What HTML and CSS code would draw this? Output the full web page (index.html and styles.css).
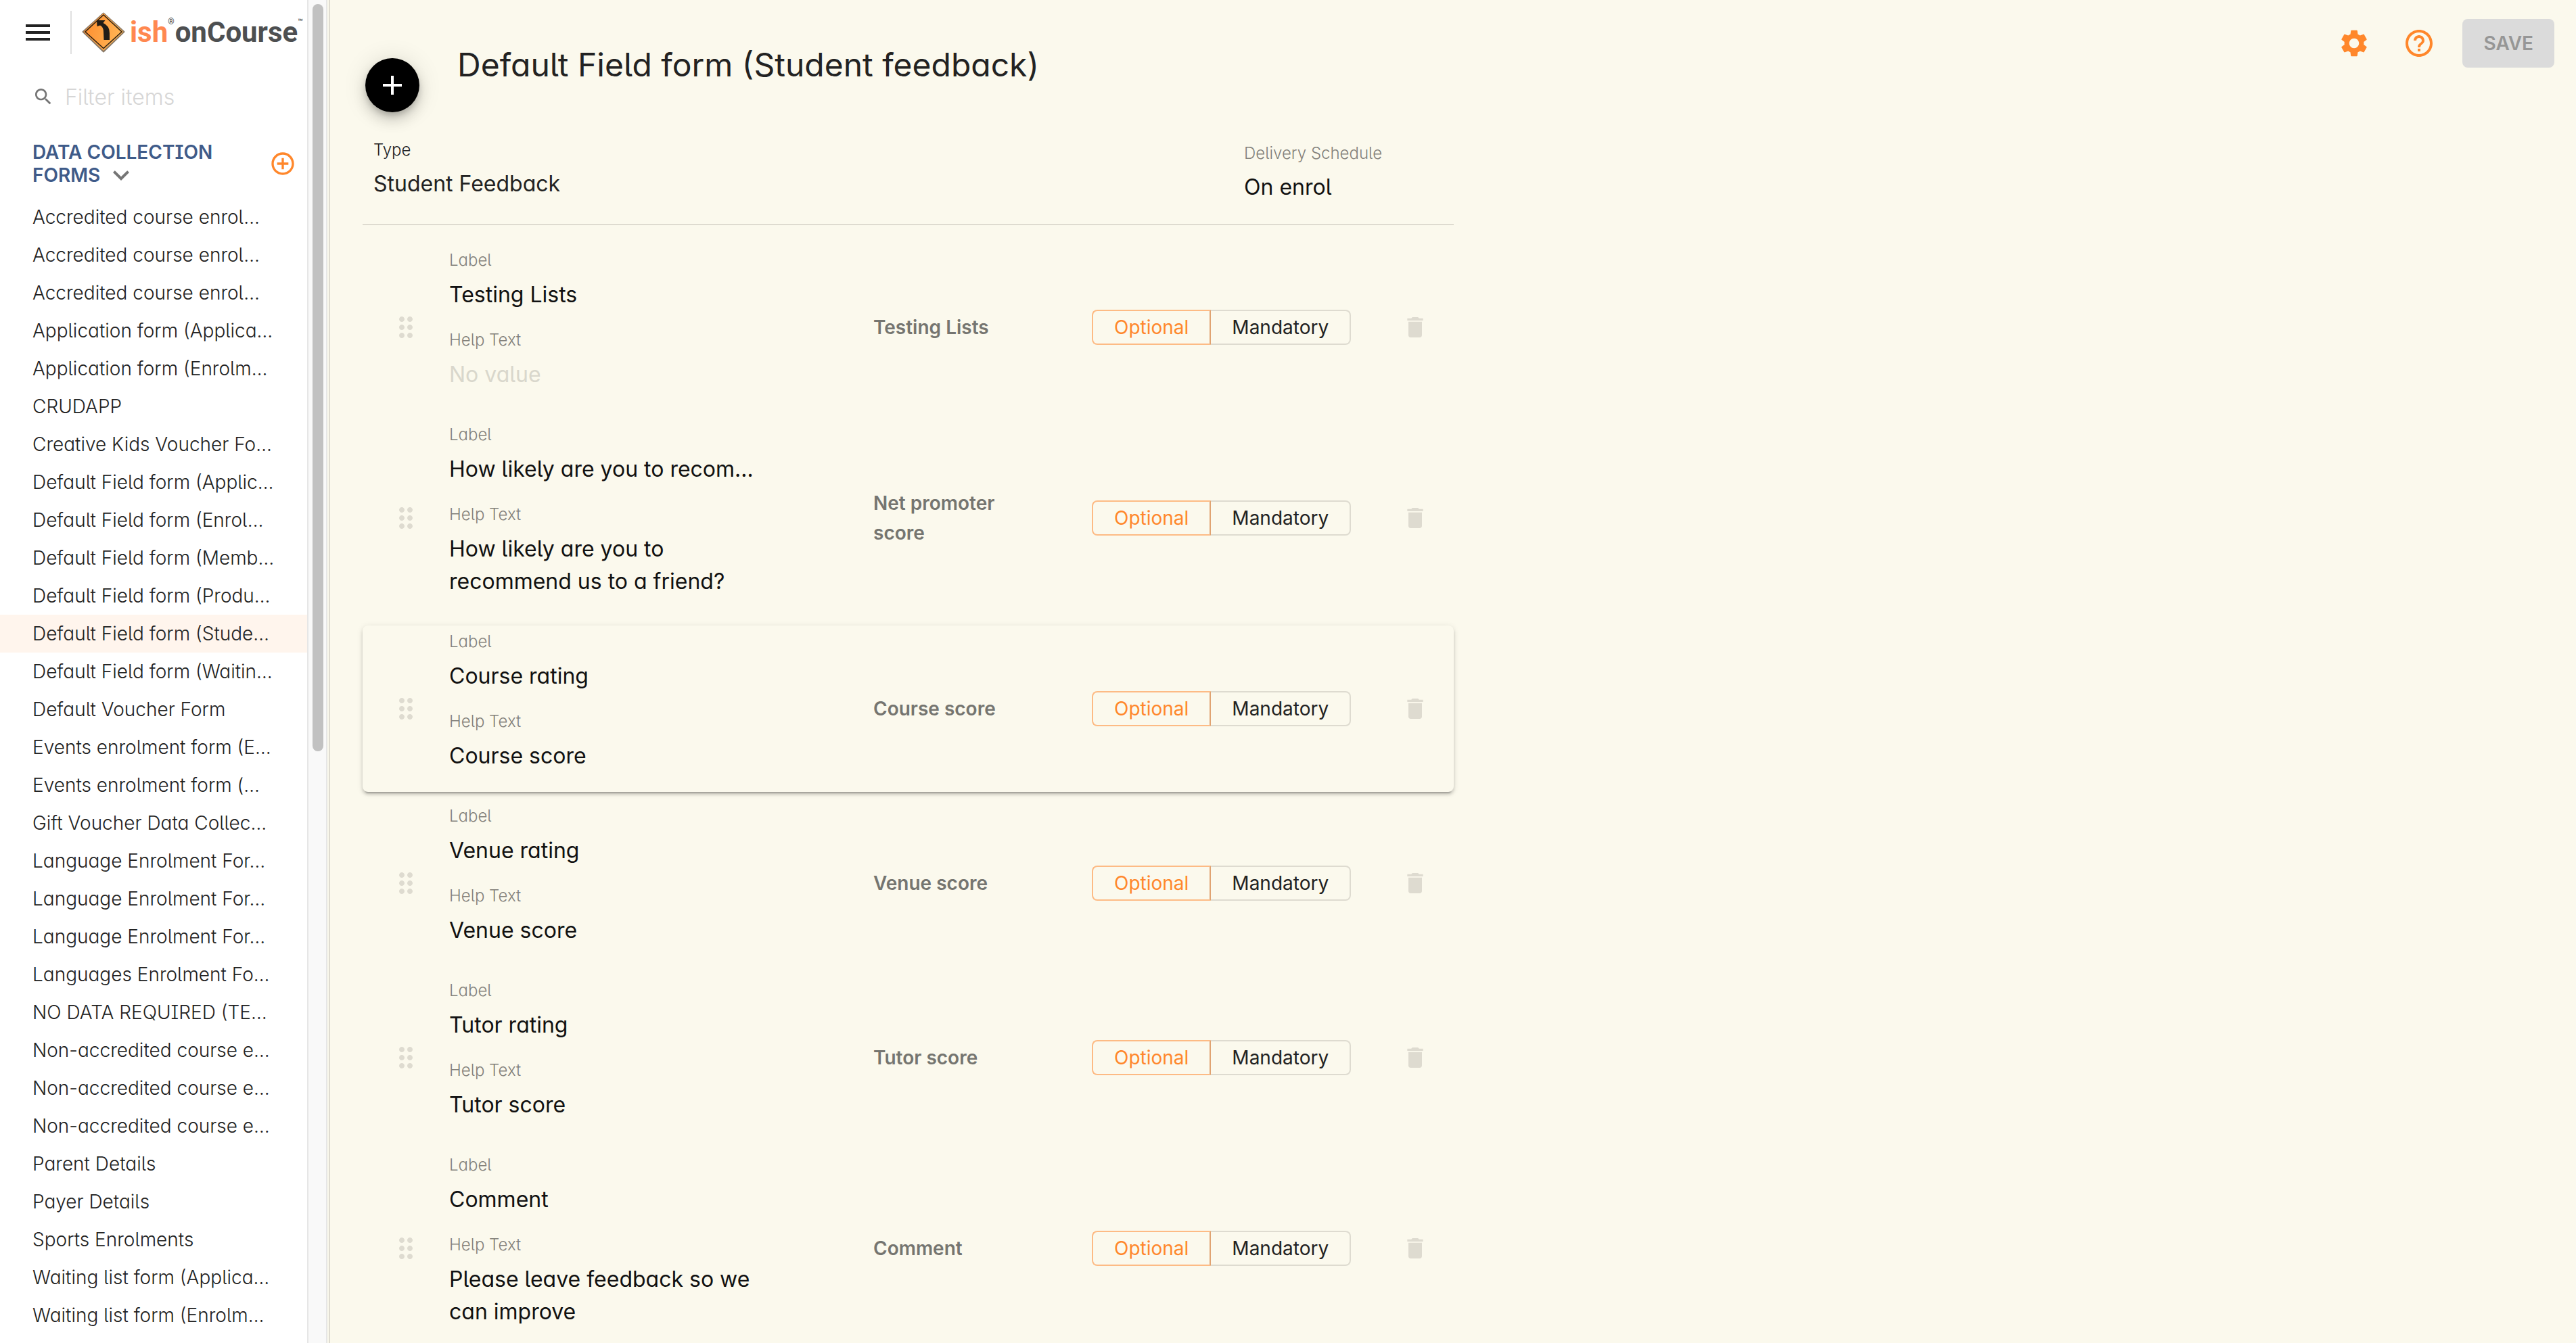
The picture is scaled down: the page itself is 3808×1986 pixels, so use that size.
FILE: index.html
```html
<!DOCTYPE html>
<html lang="en">
<head>
<meta charset="utf-8">
<title>Default Field form (Student feedback)</title>
<link rel="stylesheet" href="styles.css">
</head>
<body>
<svg class="defs" aria-hidden="true">
  <symbol id="drag" viewBox="0 0 24 24"><path d="M11 18c0 1.1-.9 2-2 2s-2-.9-2-2 .9-2 2-2 2 .9 2 2zm-2-8c-1.1 0-2 .9-2 2s.9 2 2 2 2-.9 2-2-.9-2-2-2zm0-6c-1.1 0-2 .9-2 2s.9 2 2 2 2-.9 2-2-.9-2-2-2zm6 4c1.1 0 2-.9 2-2s-.9-2-2-2-2 .9-2 2 .9 2 2 2zm0 2c-1.1 0-2 .9-2 2s.9 2 2 2 2-.9 2-2-.9-2-2-2zm0 6c-1.1 0-2 .9-2 2s.9 2 2 2 2-.9 2-2-.9-2-2-2z"/></symbol>
  <symbol id="trash" viewBox="0 0 24 24"><path d="M6 19c0 1.1.9 2 2 2h8c1.1 0 2-.9 2-2V7H6v12zM19 4h-3.5l-1-1h-5l-1 1H5v2h14V4z"/></symbol>
</svg>
<div class="app">
  <aside class="sidebar">
    <div class="sidebar-body">
      <header class="brand">
        <button class="icon-button" type="button" aria-label="Menu"><svg class="icon" viewBox="0 0 24 24"><path d="M3 18h18v-2H3v2zm0-5h18v-2H3v2zm0-7v2h18V6H3z"/></svg></button>
        <a class="logo" href="#" aria-label="ish onCourse">
          <svg class="logo-sign" viewBox="0 0 64 60">
            <defs><linearGradient id="sign" x1="0" y1="0" x2="1" y2="0.3"><stop offset="0" stop-color="#ff8a2c"/><stop offset="1" stop-color="#ffb454"/></linearGradient></defs>
            <path d="M32 1.500 62.500 29 32 58.500 1.500 29Z" fill="#777" stroke="#8a7a68" stroke-width="2" stroke-linejoin="round"/>
            <path d="M32 1.500 61.500 29 32 57 2.500 29Z" fill="url(#sign)"/>
            <path d="M32 4 59 29 32 53.500 5 29Z" fill="none" stroke="#2b2114" stroke-width="1.500"/>
            <path d="M22 12 34.500 12 31.500 16Q41 20 41 31L41 41H32.500L32 29Q32 22 27 19.500L22.500 21Z" fill="#221d18"/>
          </svg>
          <span class="logo-ish">ish</span><span class="logo-mark">®</span><span class="logo-name">onCourse</span><span class="logo-mark">™</span>
        </a>
      </header>
      <div class="filter">
        <svg class="filter-icon" viewBox="0 0 24 24"><path d="M15.500 14h-.79l-.28-.27C15.410 12.590 16 11.110 16 9.500 16 5.910 13.090 3 9.500 3S3 5.910 3 9.500 5.910 16 9.500 16c1.610 0 3.090-.59 4.230-1.570l.27.28v.79l5 4.990L20.490 19l-4.990-5zm-6 0C7.010 14 5 11.990 5 9.500S7.010 5 9.500 5 14 7.010 14 9.500 11.990 14 9.500 14z"/></svg>
        <input class="filter-input" type="text" placeholder="Filter items" aria-label="Filter items">
      </div>
      <div class="group">
        <h2 class="group-title">DATA COLLECTION FORMS <svg class="chevron" viewBox="0 0 24 24"><path d="M7.410 8.590 12 13.170l4.590-4.580L18 10l-6 6-6-6 1.410-1.410z"/></svg></h2>
        <button class="icon-button add-form" type="button" aria-label="Add form"><svg class="icon-small" viewBox="0 0 24 24"><path d="M13 7h-2v4H7v2h4v4h2v-4h4v-2h-4V7zm-1-5C6.480 2 2 6.480 2 12s4.480 10 10 10 10-4.480 10-10S17.520 2 12 2zm0 18c-4.410 0-8-3.590-8-8s3.590-8 8-8 8 3.590 8 8-3.590 8-8 8z"/></svg></button>
      </div>
      <nav class="forms">
        <a href="#">Accredited course enrol…</a>
        <a href="#">Accredited course enrol…</a>
        <a href="#">Accredited course enrol…</a>
        <a href="#">Application form (Applica…</a>
        <a href="#">Application form (Enrolm…</a>
        <a href="#">CRUDAPP</a>
        <a href="#">Creative Kids Voucher Fo…</a>
        <a href="#">Default Field form (Applic…</a>
        <a href="#">Default Field form (Enrol…</a>
        <a href="#">Default Field form (Memb…</a>
        <a href="#">Default Field form (Produ…</a>
        <a href="#" class="selected" aria-current="page">Default Field form (Stude…</a>
        <a href="#">Default Field form (Waitin…</a>
        <a href="#">Default Voucher Form</a>
        <a href="#">Events enrolment form (E…</a>
        <a href="#">Events enrolment form (…</a>
        <a href="#">Gift Voucher Data Collec…</a>
        <a href="#">Language Enrolment For…</a>
        <a href="#">Language Enrolment For…</a>
        <a href="#">Language Enrolment For…</a>
        <a href="#">Languages Enrolment Fo…</a>
        <a href="#">NO DATA REQUIRED (TE…</a>
        <a href="#">Non-accredited course e…</a>
        <a href="#">Non-accredited course e…</a>
        <a href="#">Non-accredited course e…</a>
        <a href="#">Parent Details</a>
        <a href="#">Payer Details</a>
        <a href="#">Sports Enrolments</a>
        <a href="#">Waiting list form (Applica…</a>
        <a href="#">Waiting list form (Enrolm…</a>
      </nav>
    </div>
    <div class="scroll-track"><div class="scroll-thumb"></div></div>
  </aside>

  <main class="main">
    <header class="topbar">
      <button class="fab" type="button" aria-label="Add field"><svg class="icon" viewBox="0 0 24 24"><path d="M19 13h-6v6h-2v-6H5v-2h6V5h2v6h6v2z"/></svg></button>
      <h1 class="title">Default Field form (Student feedback)</h1>
      <div class="actions">
        <button class="icon-button settings" type="button" aria-label="Settings"><svg class="icon" viewBox="0 0 24 24"><path d="M19.140 12.940c.04-.3.060-.61.060-.94 0-.32-.02-.64-.07-.94l2.030-1.580c.18-.14.230-.41.120-.61l-1.920-3.320c-.12-.22-.37-.29-.59-.22l-2.390.96c-.5-.38-1.030-.7-1.620-.94l-.36-2.540c-.04-.24-.24-.41-.48-.41h-3.840c-.24 0-.43.170-.47.410l-.36 2.540c-.59.240-1.130.570-1.620.940l-2.390-.96c-.22-.08-.47 0-.59.220L2.740 8.870c-.12.210-.08.470.120.610l2.030 1.580c-.05.300-.09.630-.09.940s.02.640.070.940l-2.030 1.580c-.18.140-.23.410-.12.610l1.920 3.320c.12.220.37.290.59.220l2.390-.96c.5.380 1.030.700 1.620.940l.36 2.540c.05.240.24.410.48.410h3.840c.24 0 .44-.17.470-.41l.36-2.540c.59-.24 1.130-.56 1.620-.94l2.390.96c.22.080.47 0 .59-.22l1.920-3.320c.12-.22.070-.47-.12-.61l-2.010-1.580zM12 15.600c-1.980 0-3.600-1.620-3.600-3.600s1.620-3.600 3.600-3.600 3.600 1.620 3.600 3.600-1.620 3.600-3.600 3.600z"/></svg></button>
        <button class="icon-button" type="button" aria-label="Help"><svg class="icon" viewBox="0 0 24 24"><path d="M11 18h2v-2h-2v2zm1-16C6.480 2 2 6.480 2 12s4.480 10 10 10 10-4.480 10-10S17.520 2 12 2zm0 18c-4.410 0-8-3.590-8-8s3.590-8 8-8 8 3.590 8 8-3.590 8-8 8zm0-14c-2.210 0-4 1.790-4 4h2c0-1.100.9-2 2-2s2 .9 2 2c0 2-3 1.750-3 5h2c0-2.250 3-2.500 3-5 0-2.210-1.790-4-4-4z"/></svg></button>
        <button class="save" type="button" disabled>SAVE</button>
      </div>
    </header>

    <div class="form">
      <dl class="summary">
        <div class="summary-type"><dt>Type</dt><dd>Student Feedback</dd></div>
        <div class="summary-schedule"><dt>Delivery Schedule</dt><dd>On enrol</dd></div>
      </dl>

      <section class="row">
        <svg class="drag"><use href="#drag"/></svg>
        <dl class="fields"><dt>Label</dt><dd>Testing Lists</dd><dt>Help Text</dt><dd class="empty">No value</dd></dl>
        <h3 class="kind">Testing Lists</h3>
        <div class="toggle" role="group" aria-label="Requirement"><button type="button" aria-pressed="true">Optional</button><button type="button" aria-pressed="false">Mandatory</button></div>
        <button class="icon-button remove" type="button" aria-label="Delete"><svg class="icon-small"><use href="#trash"/></svg></button>
      </section>
      <section class="row">
        <svg class="drag"><use href="#drag"/></svg>
        <dl class="fields"><dt>Label</dt><dd>How likely are you to recom…</dd><dt>Help Text</dt><dd>How likely are you to recommend us to a friend?</dd></dl>
        <h3 class="kind">Net promoter score</h3>
        <div class="toggle" role="group" aria-label="Requirement"><button type="button" aria-pressed="true">Optional</button><button type="button" aria-pressed="false">Mandatory</button></div>
        <button class="icon-button remove" type="button" aria-label="Delete"><svg class="icon-small"><use href="#trash"/></svg></button>
      </section>
      <section class="row raised">
        <svg class="drag"><use href="#drag"/></svg>
        <dl class="fields"><dt>Label</dt><dd>Course rating</dd><dt>Help Text</dt><dd>Course score</dd></dl>
        <h3 class="kind">Course score</h3>
        <div class="toggle" role="group" aria-label="Requirement"><button type="button" aria-pressed="true">Optional</button><button type="button" aria-pressed="false">Mandatory</button></div>
        <button class="icon-button remove" type="button" aria-label="Delete"><svg class="icon-small"><use href="#trash"/></svg></button>
      </section>
      <section class="row">
        <svg class="drag"><use href="#drag"/></svg>
        <dl class="fields"><dt>Label</dt><dd>Venue rating</dd><dt>Help Text</dt><dd>Venue score</dd></dl>
        <h3 class="kind">Venue score</h3>
        <div class="toggle" role="group" aria-label="Requirement"><button type="button" aria-pressed="true">Optional</button><button type="button" aria-pressed="false">Mandatory</button></div>
        <button class="icon-button remove" type="button" aria-label="Delete"><svg class="icon-small"><use href="#trash"/></svg></button>
      </section>
      <section class="row">
        <svg class="drag"><use href="#drag"/></svg>
        <dl class="fields"><dt>Label</dt><dd>Tutor rating</dd><dt>Help Text</dt><dd>Tutor score</dd></dl>
        <h3 class="kind">Tutor score</h3>
        <div class="toggle" role="group" aria-label="Requirement"><button type="button" aria-pressed="true">Optional</button><button type="button" aria-pressed="false">Mandatory</button></div>
        <button class="icon-button remove" type="button" aria-label="Delete"><svg class="icon-small"><use href="#trash"/></svg></button>
      </section>
      <section class="row">
        <svg class="drag"><use href="#drag"/></svg>
        <dl class="fields"><dt>Label</dt><dd>Comment</dd><dt>Help Text</dt><dd>Please leave feedback so we can improve</dd></dl>
        <h3 class="kind">Comment</h3>
        <div class="toggle" role="group" aria-label="Requirement"><button type="button" aria-pressed="true">Optional</button><button type="button" aria-pressed="false">Mandatory</button></div>
        <button class="icon-button remove" type="button" aria-label="Delete"><svg class="icon-small"><use href="#trash"/></svg></button>
      </section>
    </div>
  </main>
</div>
</body>
</html>
```
FILE: styles.css
```css
:root {
  --accent: #ff872b;
  --paper: #fbf9ed;
  --line: #dedbd0;
  --text: #222;
}

* { box-sizing: border-box; }

body, h1, h2, h3, dl, dd { margin: 0; }

body {
  font-family: Inter, "Liberation Sans", sans-serif;
  font-feature-settings: "cv05", "cv08", "cv11";
  font-size: 32px;
  color: var(--text);
  background: var(--paper);
}

button {
  font: inherit;
  color: inherit;
  background: none;
  border: 0;
  padding: 0;
}

svg { display: block; fill: currentColor; }

.defs { display: none; }
.icon { width: 48px; height: 48px; }
.icon-small { width: 40px; height: 40px; }
.icon-button { display: flex; flex: none; }

.app {
  display: flex;
  height: 100vh;
  overflow: hidden;
}

/* Sidebar */
.sidebar {
  display: flex;
  flex: none;
  width: 488px;
  padding-right: 2px;
  border-right: 2px solid var(--line);
}

.sidebar-body {
  flex: 1;
  min-width: 0;
  background: #fff;
}

.scroll-track {
  width: 30px;
  padding: 6px;
  background: #f9f9f9;
  border: solid #e6e6e6;
  border-width: 0 2px;
}

.scroll-thumb {
  width: 16px;
  height: 56%;
  border-radius: 8px;
  background: #c1c1c1;
}

.brand {
  display: flex;
  align-items: center;
  gap: 24px;
  height: 96px;
  padding-left: 32px;
}

.logo {
  display: flex;
  align-items: center;
  height: 64px;
  padding-left: 15px;
  border-left: 2px solid #e0e0e0;
  color: #4d4f51;
  text-decoration: none;
  font-family: Roboto, "Liberation Sans", sans-serif;
  font-size: 42px;
  font-weight: 700;
  line-height: 64px;
}

.logo-sign { flex: none; width: 64px; height: 60px; margin-right: 7px; }
.logo-ish { color: #ff8850; }
.logo-mark { align-self: flex-start; font-size: 12px; line-height: 32px; }
.logo-name { margin-left: 1px; }

.filter {
  display: flex;
  align-items: center;
  gap: 16px;
  height: 94px;
  margin-bottom: 2px;
  padding-left: 48px;
}

.filter-icon { flex: none; width: 32px; height: 32px; color: #757575; }

.filter-input {
  flex: 1;
  min-width: 0;
  padding: 0;
  border: 0;
  outline: 0;
  background: none;
  font: inherit;
  font-feature-settings: inherit;
  font-weight: 300;
}

.filter-input::placeholder { color: #d6d6d6; opacity: 1; }

.group {
  display: flex;
  align-items: center;
  justify-content: space-between;
  padding: 16px 16px 17px 48px;
}

.group-title {
  width: 300px;
  font-size: 28px;
  font-weight: 600;
  line-height: 34px;
  color: #3f5b89;
}

.chevron {
  display: inline-block;
  width: 48px;
  height: 48px;
  margin: -7px 0;
  vertical-align: top;
  color: #757575;
}

.add-form { color: var(--accent); }

.forms a {
  display: block;
  height: 56px;
  padding: 0 40px 0 48px;
  overflow: hidden;
  white-space: nowrap;
  color: var(--text);
  font-size: 28px;
  font-weight: 300;
  line-height: 56px;
  text-decoration: none;
}

.forms .selected { background: #fff5ed; }

/* Main */
.main {
  flex: 1;
  min-width: 0;
  padding: 0 32px 0 48px;
}

.topbar {
  display: flex;
  align-items: flex-start;
  gap: 56px;
  height: 204px;
}

.fab {
  display: grid;
  place-items: center;
  flex: none;
  width: 80px;
  height: 80px;
  margin: 86px 0 0 4px;
  border-radius: 50%;
  background: #000;
  color: #fff;
  box-shadow: 0 6px 10px -2px rgba(0, 0, 0, .2), 0 12px 20px rgba(0, 0, 0, .14), 0 2px 36px rgba(0, 0, 0, .12);
}

.title {
  flex: 1;
  padding-top: 64px;
  font-size: 48px;
  font-weight: 400;
  line-height: 64px;
}

.actions {
  display: flex;
  align-items: center;
  gap: 40px;
  padding-top: 28px;
  color: var(--accent);
}

.settings { margin-right: 8px; }

.save {
  height: 72px;
  padding: 0 31px;
  border-radius: 8px;
  background: #dbdbdb;
  color: #969696;
  font-size: 28px;
  font-weight: 600;
}

.form { max-width: 1613px; }

.summary {
  display: flex;
  height: 129px;
  margin-bottom: 28px;
  padding: 6px 16px 0;
  border-bottom: 2px solid var(--line);
}

.summary-type { flex: 1287; }
.summary-schedule { flex: 294; padding-top: 5px; }

dt {
  color: #83817b;
  font-size: 24px;
  font-weight: 300;
  line-height: 24px;
}

dd { color: #111; line-height: 48px; }

.summary dd { padding-top: 14px; }
.summary-type dt, .summary-type dd { color: var(--text); }

.row {
  display: grid;
  grid-template-columns: 128px 627fr 323fr 458fr 77px;
  align-items: center;
  margin-bottom: 12px;
  padding: 12px 0 29px;
  border-radius: 8px;
}

.raised {
  box-shadow: 0 6px 2px -4px rgba(0, 0, 0, .2), 0 4px 4px rgba(0, 0, 0, .14), 0 2px 10px rgba(0, 0, 0, .12);
}

.row > :not(.fields) { margin-top: 17px; }

.drag { width: 48px; height: 48px; margin-left: 40px; color: var(--line); }

.fields { max-width: 468px; }
.fields dd { padding-top: 15px; }
.fields dd + dt { margin-top: 31px; }
.fields .empty { color: #d9d7cc; }

.kind {
  max-width: 240px;
  color: #757570;
  font-size: 28px;
  font-weight: 600;
  line-height: 44px;
}

.toggle { display: flex; font-size: 28px; font-feature-settings: normal; }

.toggle button {
  height: 52px;
  padding: 0 31px;
  border: 2px solid var(--line);
  border-radius: 0 8px 8px 0;
}

.toggle button + button { border-left: 0; }

.toggle [aria-pressed="true"] {
  border-color: #fdbb85;
  border-right-color: #e0a372;
  border-radius: 8px 0 0 8px;
  color: var(--accent);
}

.remove { color: var(--line); }
```
